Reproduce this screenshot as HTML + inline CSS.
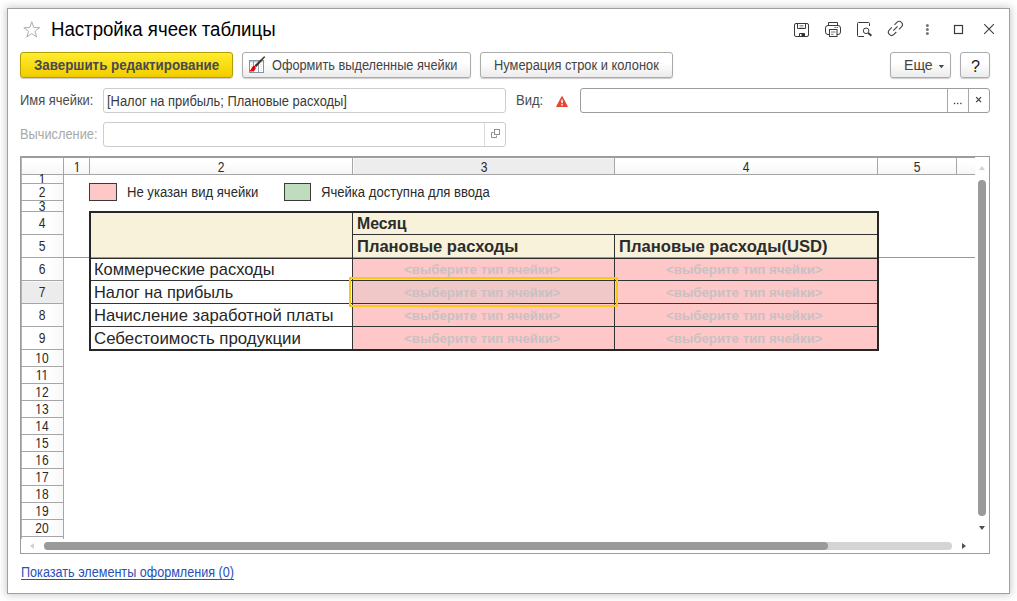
<!DOCTYPE html>
<html>
<head>
<meta charset="utf-8">
<style>
html,body{margin:0;padding:0;}
body{width:1017px;height:601px;overflow:hidden;background:#fff;font-family:"Liberation Sans",sans-serif;font-size:13px;color:#333;position:relative;}
.abs{position:absolute;}
#win{position:absolute;left:7px;top:8px;width:1001px;height:584px;border:1px solid #a0a0a0;background:#fff;box-shadow:0 0 8px 1px rgba(0,0,0,0.21);}
.t{position:absolute;white-space:nowrap;line-height:1;transform-origin:0 0;}
.btn{position:absolute;box-sizing:border-box;height:26px;top:52px;border:1px solid #ababab;border-radius:3px;background:linear-gradient(#ffffff 40%,#ececec);box-shadow:0 1px 1px rgba(0,0,0,0.2);}
.inp{position:absolute;box-sizing:border-box;border:1px solid #cdcdcd;border-radius:3px;background:#fff;}
.hl{position:absolute;height:1px;background:#a6a6a6;}
.vl{position:absolute;width:1px;background:#a6a6a6;}
.hd{position:absolute;text-align:center;font-size:14px;line-height:1;color:#2a2a2a;white-space:nowrap;transform:scaleX(0.860);}
</style>
</head>
<body>
<div id="win"></div>

<!-- title star -->
<svg class="abs" style="left:22px;top:20.400px" width="20" height="19" viewBox="0 0 20 19"><path d="M9.75 1.7 L11.75 7.6 L17.7 7.7 L13 11.3 L14.7 17 L9.75 13.6 L4.8 17 L6.5 11.3 L1.8 7.7 L7.75 7.6 Z" fill="none" stroke="#a6adb7" stroke-width="1"/></svg>

<!-- title icons -->
<svg class="abs" style="left:790px;top:18px" width="210" height="24" viewBox="0 0 210 24" fill="none" stroke="#3a3a3a" stroke-width="1">
  <!-- save -->
  <rect x="4.500" y="5.500" width="14" height="13" rx="1.500"/>
  <path d="M7.500 5.500 V10.500 H15.500 V5.500"/>
  <path d="M9.500 7.500h4 M9.500 9h4" stroke-width="0.600" stroke="#555"/>
  <path d="M9.500 18.500 V15.500 H14.500 V18.500"/>
  <rect x="11.500" y="15.500" width="3" height="3" fill="#333" stroke="none"/>
  <!-- print -->
  <path d="M38.500 7.500 V4.500 H47.500 V7.500"/>
  <rect x="35.500" y="7.500" width="15" height="9" rx="2.500"/>
  <rect x="39.500" y="11.500" width="7.500" height="7" fill="#fff"/>
  <path d="M41 14h4.500 M41 16.300h2.500" stroke-width="0.800" stroke="#555"/>
  <path d="M44.500 9.500h1.200 M46.700 9.500h1.200" stroke-width="0.900"/>
  <!-- preview -->
  <path d="M79.500 8 V5.500 Q79.500 4.500 78.500 4.500 H68.500 Q67.500 4.500 67.500 5.500 V17.500 Q67.500 18.500 68.500 18.500 H74"/>
  <circle cx="76.100" cy="12.800" r="2.800"/>
  <path d="M78.300 15 l3.100 2.700" stroke-width="1.900"/>
  <!-- link -->
  <g transform="translate(105.400,10.400) rotate(-45)" stroke-width="1.100" stroke="#444" stroke-linecap="butt">
    <path d="M1.900 -3.200 H5.300 A3.200 3.200 0 0 1 5.300 3.200 H1.900"/>
    <path d="M-1.900 -3.200 H-5.300 A3.200 3.200 0 0 0 -5.300 3.200 H-1.900"/>
    <path d="M-3 0 H3"/>
  </g>
  <!-- dots -->
  <g fill="#777" stroke="none"><circle cx="137.400" cy="7.600" r="1.500"/><circle cx="137.400" cy="11.550" r="1.500"/><circle cx="137.400" cy="15.500" r="1.500"/></g>
  <!-- max -->
  <rect x="164.500" y="7.500" width="8" height="8" stroke-width="1.200"/>
  <!-- close -->
  <path d="M194.200 6.100 l9.700 9.700 M203.900 6.100 l-9.700 9.700" stroke-width="1.050"/>
</svg>

<!-- toolbar -->
<div class="btn" style="left:20px;width:213px;background:linear-gradient(#ffec30,#f5d200 85%,#efc900);border-color:#b59e00;"></div>
<div class="btn" style="left:242px;width:229px;"></div>
<svg class="abs" style="left:244px;top:52px" width="30" height="26" viewBox="0 0 30 26">
  <rect x="5.500" y="8.500" width="14" height="12" fill="#fff" stroke="#8494a6" stroke-width="1"/>
  <rect x="6" y="9" width="13" height="1.500" fill="#c3ced9"/>
  <path d="M9.500 8.500v12 M14.500 8.500v12" stroke="#8e9dae" stroke-width="1"/>
  <path d="M7.500 12v7 M12 12v7 M17 12v7" stroke="#ccd4dc" stroke-width="0.800" stroke-dasharray="1 1"/>
  <path d="M20.900 5 L20.200 4.600 L10.900 13.400 L12.300 14.700 Z" fill="#45280f" stroke="#45280f" stroke-width="0.600" stroke-linejoin="round"/>
  <path d="M11.200 14 C9 13.300 8 15.300 7.500 16.600 C7 17.900 6 18.600 5.300 19 C7.300 20.100 10.400 19.500 11.200 17.600 C11.700 16.400 11.900 15.200 11.200 14 Z" fill="#e80000"/>
</svg>
<div class="btn" style="left:480px;width:193px;"></div>
<div class="btn" style="left:890px;width:61px;"></div>
<svg class="abs" style="left:936px;top:62px" width="12" height="10" viewBox="0 0 12 10"><path d="M2.700 3 H8.100 L5.400 6.300 Z" fill="#484848"/></svg>
<div class="btn" style="left:960px;width:30px;"></div>

<!-- fields row 1 -->
<div class="inp" style="left:103px;top:88px;width:403px;height:25px;"></div>
<svg class="abs" style="left:555px;top:95px" width="14" height="13" viewBox="0 0 14 13"><path d="M7 1.800 L12.200 11.500 H1.800 Z" fill="#e64530" stroke="#e64530" stroke-width="1.200" stroke-linejoin="round"/><rect x="6.250" y="4.600" width="1.500" height="3.600" fill="#fff"/><rect x="6.250" y="9.100" width="1.500" height="1.500" fill="#fff"/></svg>
<div class="inp" style="left:580px;top:88px;width:410px;height:25px;border-color:#9c9c9c;"></div>
<div class="vl" style="left:947px;top:89px;height:23px;background:#a8a8a8;"></div>
<div class="vl" style="left:968px;top:89px;height:23px;background:#a8a8a8;"></div>
<svg class="abs" style="left:948px;top:89px" width="41" height="23" viewBox="0 0 41 23">
  <g fill="#333"><rect x="5.950" y="13.800" width="1.250" height="1.350"/><rect x="9.100" y="13.800" width="1.250" height="1.350"/><rect x="12.250" y="13.800" width="1.250" height="1.350"/></g>
  <path d="M28.100 8.100 l5 5 M33.100 8.100 l-5 5" stroke="#3a3a3a" stroke-width="1.150" fill="none"/>
</svg>

<!-- fields row 2 -->
<div class="inp" style="left:103px;top:122px;width:403px;height:25px;"></div>
<div class="vl" style="left:484px;top:123px;height:23px;background:#dadada;"></div>
<svg class="abs" style="left:490px;top:128px" width="12" height="12" viewBox="0 0 12 12" fill="none" stroke="#8f8f8f" stroke-width="1"><rect x="4.500" y="1.500" width="5" height="5"/><path d="M3.500 4.500h-2v5h5v-2"/></svg>

<!-- spreadsheet -->
<div class="abs" id="sheet" style="left:20px;top:156px;width:968px;height:396px;border:1px solid #9c9c9c;background:#fff;"></div>

<!-- header backgrounds -->
<div class="abs" style="left:21px;top:157px;width:954px;height:17px;background:linear-gradient(#ffffff 30%,#f6f6f6);"></div>
<div class="abs" style="left:22px;top:175px;width:41px;height:363px;background:linear-gradient(90deg,#ffffff 60%,#f8f8f8);"></div>
<div class="abs" style="left:353px;top:158px;width:261px;height:16px;background:#ededed;border-left:1px solid #fafafa;border-top:1px solid #f6f6f6;box-sizing:border-box;"></div>
<div class="hl" style="left:21px;top:157px;width:954px;background:#9c9c9c;"></div>
<div class="hl" style="left:21px;top:174px;width:954px;"></div>
<div class="vl" style="left:21px;top:157px;height:382px;background:#b4b4b4;"></div>
<div class="vl" style="left:63px;top:157px;height:382px;"></div>
<div class="vl" style="left:89px;top:157px;height:18px;"></div>
<div class="vl" style="left:352px;top:157px;height:18px;"></div>
<div class="vl" style="left:614px;top:157px;height:18px;"></div>
<div class="vl" style="left:877px;top:157px;height:18px;"></div>
<div class="vl" style="left:956px;top:157px;height:18px;"></div>

<!-- row 7 header selected bg -->
<div class="abs" style="left:22px;top:281px;width:41px;height:22px;background:#ececec;border-top:1px solid #f8f8f8;box-sizing:border-box;"></div>

<!-- row header lines -->
<div class="hl" style="left:21px;top:183px;width:42px;"></div>
<div class="hl" style="left:21px;top:200px;width:42px;"></div>
<div class="hl" style="left:21px;top:211px;width:42px;"></div>
<div class="hl" style="left:21px;top:234px;width:42px;"></div>
<div class="hl" style="left:21px;top:257px;width:42px;"></div>
<div class="hl" style="left:21px;top:280px;width:42px;"></div>
<div class="hl" style="left:21px;top:303px;width:42px;"></div>
<div class="hl" style="left:21px;top:326px;width:42px;"></div>
<div class="hl" style="left:21px;top:349px;width:42px;"></div>
<div class="hl" style="left:21px;top:366px;width:42px;"></div>
<div class="hl" style="left:21px;top:383px;width:42px;"></div>
<div class="hl" style="left:21px;top:400px;width:42px;"></div>
<div class="hl" style="left:21px;top:417px;width:42px;"></div>
<div class="hl" style="left:21px;top:434px;width:42px;"></div>
<div class="hl" style="left:21px;top:451px;width:42px;"></div>
<div class="hl" style="left:21px;top:468px;width:42px;"></div>
<div class="hl" style="left:21px;top:485px;width:42px;"></div>
<div class="hl" style="left:21px;top:502px;width:42px;"></div>
<div class="hl" style="left:21px;top:519px;width:42px;"></div>
<div class="hl" style="left:21px;top:536px;width:42px;"></div>

<div class="hd" style="left:61.5px;top:160.2px;width:30px;">1</div>
<div class="hd" style="left:206.0px;top:160.2px;width:30px;">2</div>
<div class="hd" style="left:468.5px;top:160.2px;width:30px;">3</div>
<div class="hd" style="left:730.5px;top:160.2px;width:30px;">4</div>
<div class="hd" style="left:901.5px;top:160.2px;width:30px;">5</div>
<div class="hd" style="left:27px;top:171.5px;width:30px;height:11.5px;overflow:hidden;">1</div>
<div class="hd" style="left:27px;top:185.15px;width:30px;">2</div>
<div class="hd" style="left:27px;top:199px;width:30px;height:12px;overflow:hidden;">3</div>
<div class="hd" style="left:27px;top:216.05px;width:30px;">4</div>
<div class="hd" style="left:27px;top:239.05px;width:30px;">5</div>
<div class="hd" style="left:27px;top:262.05px;width:30px;">6</div>
<div class="hd" style="left:27px;top:285.05px;width:30px;">7</div>
<div class="hd" style="left:27px;top:308.05px;width:30px;">8</div>
<div class="hd" style="left:27px;top:331.15px;width:30px;">9</div>
<div class="hd" style="left:27px;top:351.25px;width:30px;">10</div>
<div class="hd" style="left:27px;top:368.25px;width:30px;">11</div>
<div class="hd" style="left:27px;top:385.25px;width:30px;">12</div>
<div class="hd" style="left:27px;top:402.25px;width:30px;">13</div>
<div class="hd" style="left:27px;top:419.25px;width:30px;">14</div>
<div class="hd" style="left:27px;top:436.25px;width:30px;">15</div>
<div class="hd" style="left:27px;top:453.25px;width:30px;">16</div>
<div class="hd" style="left:27px;top:470.25px;width:30px;">17</div>
<div class="hd" style="left:27px;top:487.25px;width:30px;">18</div>
<div class="hd" style="left:27px;top:504.25px;width:30px;">19</div>
<div class="hd" style="left:27px;top:521.25px;width:30px;">20</div>
<div class="abs" style="left:74px;top:171px;width:7px;height:1px;background:linear-gradient(90deg,#fafafa 0px 1px,#f9f9f9 1px 2px,#c4c4c4 2px 3px,#545454 3px 4px,#e5e5e5 4px 5px,#f9f9f9 5px 7px);"></div>
<div class="abs" style="left:35px;top:362px;width:7px;height:1px;background:linear-gradient(90deg,#ffffff 0px 2px,#f7f7f7 2px 3px,#767676 3px 4px,#a1a1a1 4px 5px,#ffffff 5px 7px);"></div>
<div class="abs" style="left:35px;top:396px;width:7px;height:1px;background:linear-gradient(90deg,#ffffff 0px 2px,#f7f7f7 2px 3px,#767676 3px 4px,#a1a1a1 4px 5px,#ffffff 5px 7px);"></div>
<div class="abs" style="left:35px;top:413px;width:7px;height:1px;background:linear-gradient(90deg,#ffffff 0px 2px,#f7f7f7 2px 3px,#767676 3px 4px,#a1a1a1 4px 5px,#ffffff 5px 6px,#fefefe 6px 7px);"></div>
<div class="abs" style="left:35px;top:430px;width:7px;height:1px;background:linear-gradient(90deg,#ffffff 0px 2px,#f7f7f7 2px 3px,#767676 3px 4px,#a1a1a1 4px 5px,#ffffff 5px 6px,#f8f8f8 6px 7px);"></div>
<div class="abs" style="left:35px;top:447px;width:7px;height:1px;background:linear-gradient(90deg,#ffffff 0px 2px,#f7f7f7 2px 3px,#767676 3px 4px,#a1a1a1 4px 5px,#ffffff 5px 7px);"></div>
<div class="abs" style="left:35px;top:464px;width:7px;height:1px;background:linear-gradient(90deg,#ffffff 0px 2px,#f7f7f7 2px 3px,#767676 3px 4px,#a1a1a1 4px 5px,#ffffff 5px 7px);"></div>
<div class="abs" style="left:35px;top:481px;width:7px;height:1px;background:linear-gradient(90deg,#ffffff 0px 2px,#f7f7f7 2px 3px,#767676 3px 4px,#a1a1a1 4px 5px,#ffffff 5px 7px);"></div>
<div class="abs" style="left:35px;top:498px;width:7px;height:1px;background:linear-gradient(90deg,#ffffff 0px 2px,#f7f7f7 2px 3px,#767676 3px 4px,#a1a1a1 4px 5px,#ffffff 5px 6px,#fefefe 6px 7px);"></div>
<div class="abs" style="left:35px;top:515px;width:7px;height:1px;background:linear-gradient(90deg,#ffffff 0px 2px,#f7f7f7 2px 3px,#767676 3px 4px,#a1a1a1 4px 5px,#ffffff 5px 7px);"></div>
<div class="abs" style="left:36px;top:379px;width:13px;height:1px;background:linear-gradient(90deg,#ffffff 0px 2px,#c9c9c9 2px 3px,#555555 3px 4px,#e9e9e9 4px 5px,#ffffff 5px 7px,#fefefe 7px 8px,#9d9d9d 8px 9px,#737373 9px 10px,#f9f9f9 10px 11px,#fefefe 11px 13px);"></div>

<!-- legend -->
<div class="abs" style="left:89px;top:183px;width:26px;height:16px;border:1px solid #3a3a3a;background:#ffc8c8;"></div>
<div class="abs" style="left:284px;top:183px;width:25px;height:16px;border:1px solid #3a3a3a;background:#bfdcbf;"></div>

<!-- table fills -->
<div class="abs" style="left:90px;top:212px;width:788px;height:45px;background:#f8f2da;"></div>
<div class="abs" style="left:353px;top:259px;width:525px;height:90px;background:#ffc8c8;"></div>
<div class="abs" style="left:353px;top:281px;width:261px;height:22px;background:#f0c8c8;"></div>

<!-- fixed line -->
<div class="hl" style="left:63px;top:257px;width:912px;background:#989898;"></div>

<!-- table borders -->
<div class="hl" style="left:353px;top:234px;width:525px;background:#333;"></div>
<div class="hl" style="left:90px;top:258px;width:788px;background:#2c2c2c;"></div>
<div class="hl" style="left:90px;top:280px;width:788px;background:#333;"></div>
<div class="hl" style="left:90px;top:303px;width:788px;background:#333;"></div>
<div class="hl" style="left:90px;top:326px;width:788px;background:#333;"></div>
<div class="vl" style="left:352px;top:212px;height:137px;background:#333;"></div>
<div class="vl" style="left:614px;top:235px;height:114px;background:#333;"></div>
<div class="abs" style="left:89px;top:211px;width:786px;height:136px;border:2px solid #262626;box-sizing:content-box;"></div>

<!-- selection -->
<div class="abs" style="left:349px;top:277px;width:265px;height:26px;border:2px solid #f7c815;"></div>

<div class="t" id="title" style="left:51.00px;top:20.00px;font-size:19.4px;font-weight:normal;color:#000;transform:scaleX(0.9606);">Настройка ячеек таблицы</div>
<div class="t" id="b1" style="left:34.00px;top:58.00px;font-size:14.3px;font-weight:bold;color:#464a54;transform:scaleX(0.9317);">Завершить редактирование</div>
<div class="t" id="b2" style="left:272.00px;top:58.00px;font-size:14.0px;font-weight:normal;color:#444;transform:scaleX(0.9107);">Оформить выделенные ячейки</div>
<div class="t" id="b3" style="left:494.00px;top:58.00px;font-size:14.0px;font-weight:normal;color:#444;transform:scaleX(0.9180);">Нумерация строк и колонок</div>
<div class="t" id="b4" style="left:904.00px;top:58.00px;font-size:14.0px;font-weight:normal;color:#444;transform:scaleX(1.0048);">Еще</div>
<div class="t" id="b5" style="left:971.00px;top:59.00px;font-size:15.8px;font-weight:normal;color:#1a1a1a;transform:scaleX(1.0231);">?</div>
<div class="t" id="l1" style="left:20.00px;top:93.00px;font-size:14.0px;font-weight:normal;color:#4a4a4a;transform:scaleX(0.9228);">Имя ячейки:</div>
<div class="t" id="v1" style="left:107.00px;top:94.00px;font-size:14.0px;font-weight:normal;color:#3a3a3a;transform:scaleX(0.9209);">[Налог на прибыль; Плановые расходы]</div>
<div class="t" id="l2" style="left:516.00px;top:93.00px;font-size:14.0px;font-weight:normal;color:#4a4a4a;transform:scaleX(0.9307);">Вид:</div>
<div class="t" id="l3" style="left:20.00px;top:127.00px;font-size:14.0px;font-weight:normal;color:#a8a8a8;transform:scaleX(0.9156);">Вычисление:</div>
<div class="t" id="lg1" style="left:127.00px;top:185.00px;font-size:14.0px;font-weight:normal;color:#2a2a2a;transform:scaleX(0.9352);">Не указан вид ячейки</div>
<div class="t" id="lg2" style="left:321.00px;top:185.00px;font-size:14.0px;font-weight:normal;color:#2a2a2a;transform:scaleX(0.9340);">Ячейка доступна для ввода</div>
<div class="t" id="h1" style="left:357.00px;top:216.00px;font-size:16.6px;font-weight:bold;color:#2c2c2c;transform:scaleX(0.9545);">Месяц</div>
<div class="t" id="h2" style="left:357.00px;top:239.00px;font-size:16.6px;font-weight:bold;color:#2c2c2c;transform:scaleX(0.9975);">Плановые расходы</div>
<div class="t" id="h3" style="left:619.00px;top:239.00px;font-size:16.6px;font-weight:bold;color:#2c2c2c;transform:scaleX(1.0031);">Плановые расходы(USD)</div>
<div class="t" id="r1" style="left:94.00px;top:262.00px;font-size:16.6px;font-weight:normal;color:#262626;transform:scaleX(0.9936);">Коммерческие расходы</div>
<div class="t" id="r2" style="left:94.00px;top:285.00px;font-size:16.6px;font-weight:normal;color:#262626;transform:scaleX(0.9855);">Налог на прибыль</div>
<div class="t" id="r3" style="left:94.00px;top:308.00px;font-size:16.6px;font-weight:normal;color:#262626;transform:scaleX(1.0027);">Начисление заработной платы</div>
<div class="t" id="r4" style="left:94.00px;top:331.00px;font-size:16.6px;font-weight:normal;color:#262626;transform:scaleX(1.0145);">Себестоимость продукции</div>
<div class="t" id="link" style="left:21.00px;top:565.00px;font-size:14.0px;font-weight:normal;color:#2750b8;transform:scaleX(0.9015);text-decoration:underline;text-decoration-skip-ink:none;text-decoration-thickness:1px;text-underline-offset:1.5px;">Показать элементы оформления (0)</div>
<div class="t" id="p00" style="left:404.00px;top:263.00px;font-size:13.4px;font-weight:bold;color:#c8c0c3;transform:scaleX(0.9912);">&lt;выберите тип ячейки&gt;</div>
<div class="t" id="p01" style="left:404.00px;top:286.00px;font-size:13.4px;font-weight:bold;color:#c8c0c3;transform:scaleX(0.9912);">&lt;выберите тип ячейки&gt;</div>
<div class="t" id="p02" style="left:404.00px;top:309.00px;font-size:13.4px;font-weight:bold;color:#c8c0c3;transform:scaleX(0.9912);">&lt;выберите тип ячейки&gt;</div>
<div class="t" id="p03" style="left:404.00px;top:332.00px;font-size:13.4px;font-weight:bold;color:#c8c0c3;transform:scaleX(0.9912);">&lt;выберите тип ячейки&gt;</div>
<div class="t" id="p10" style="left:666.00px;top:263.00px;font-size:13.4px;font-weight:bold;color:#c8c0c3;transform:scaleX(0.9912);">&lt;выберите тип ячейки&gt;</div>
<div class="t" id="p11" style="left:666.00px;top:286.00px;font-size:13.4px;font-weight:bold;color:#c8c0c3;transform:scaleX(0.9912);">&lt;выберите тип ячейки&gt;</div>
<div class="t" id="p12" style="left:666.00px;top:309.00px;font-size:13.4px;font-weight:bold;color:#c8c0c3;transform:scaleX(0.9912);">&lt;выберите тип ячейки&gt;</div>
<div class="t" id="p13" style="left:666.00px;top:332.00px;font-size:13.4px;font-weight:bold;color:#c8c0c3;transform:scaleX(0.9912);">&lt;выберите тип ячейки&gt;</div>

<!-- scrollbars -->
<div class="abs" style="left:978px;top:180px;width:8px;height:336px;border-radius:4px;background:#9a9a9a;"></div>
<div class="abs" style="left:979px;top:166px;width:0;height:0;border-left:3px solid transparent;border-right:3px solid transparent;border-bottom:4px solid #d2d2d2;"></div>
<div class="abs" style="left:979px;top:526px;width:0;height:0;border-left:3px solid transparent;border-right:3px solid transparent;border-top:4px solid #505050;"></div>

<div class="abs" style="left:44px;top:542px;width:908px;height:8px;border-radius:4px;background:#d4d4d4;"></div>
<div class="abs" style="left:44px;top:542px;width:784px;height:8px;border-radius:4px;background:#9a9a9a;"></div>
<div class="abs" style="left:30px;top:543px;width:0;height:0;border-top:3px solid transparent;border-bottom:3px solid transparent;border-right:4px solid #d2d2d2;"></div>
<div class="abs" style="left:962px;top:543px;width:0;height:0;border-top:3px solid transparent;border-bottom:3px solid transparent;border-left:4px solid #505050;"></div>

</body>
</html>
